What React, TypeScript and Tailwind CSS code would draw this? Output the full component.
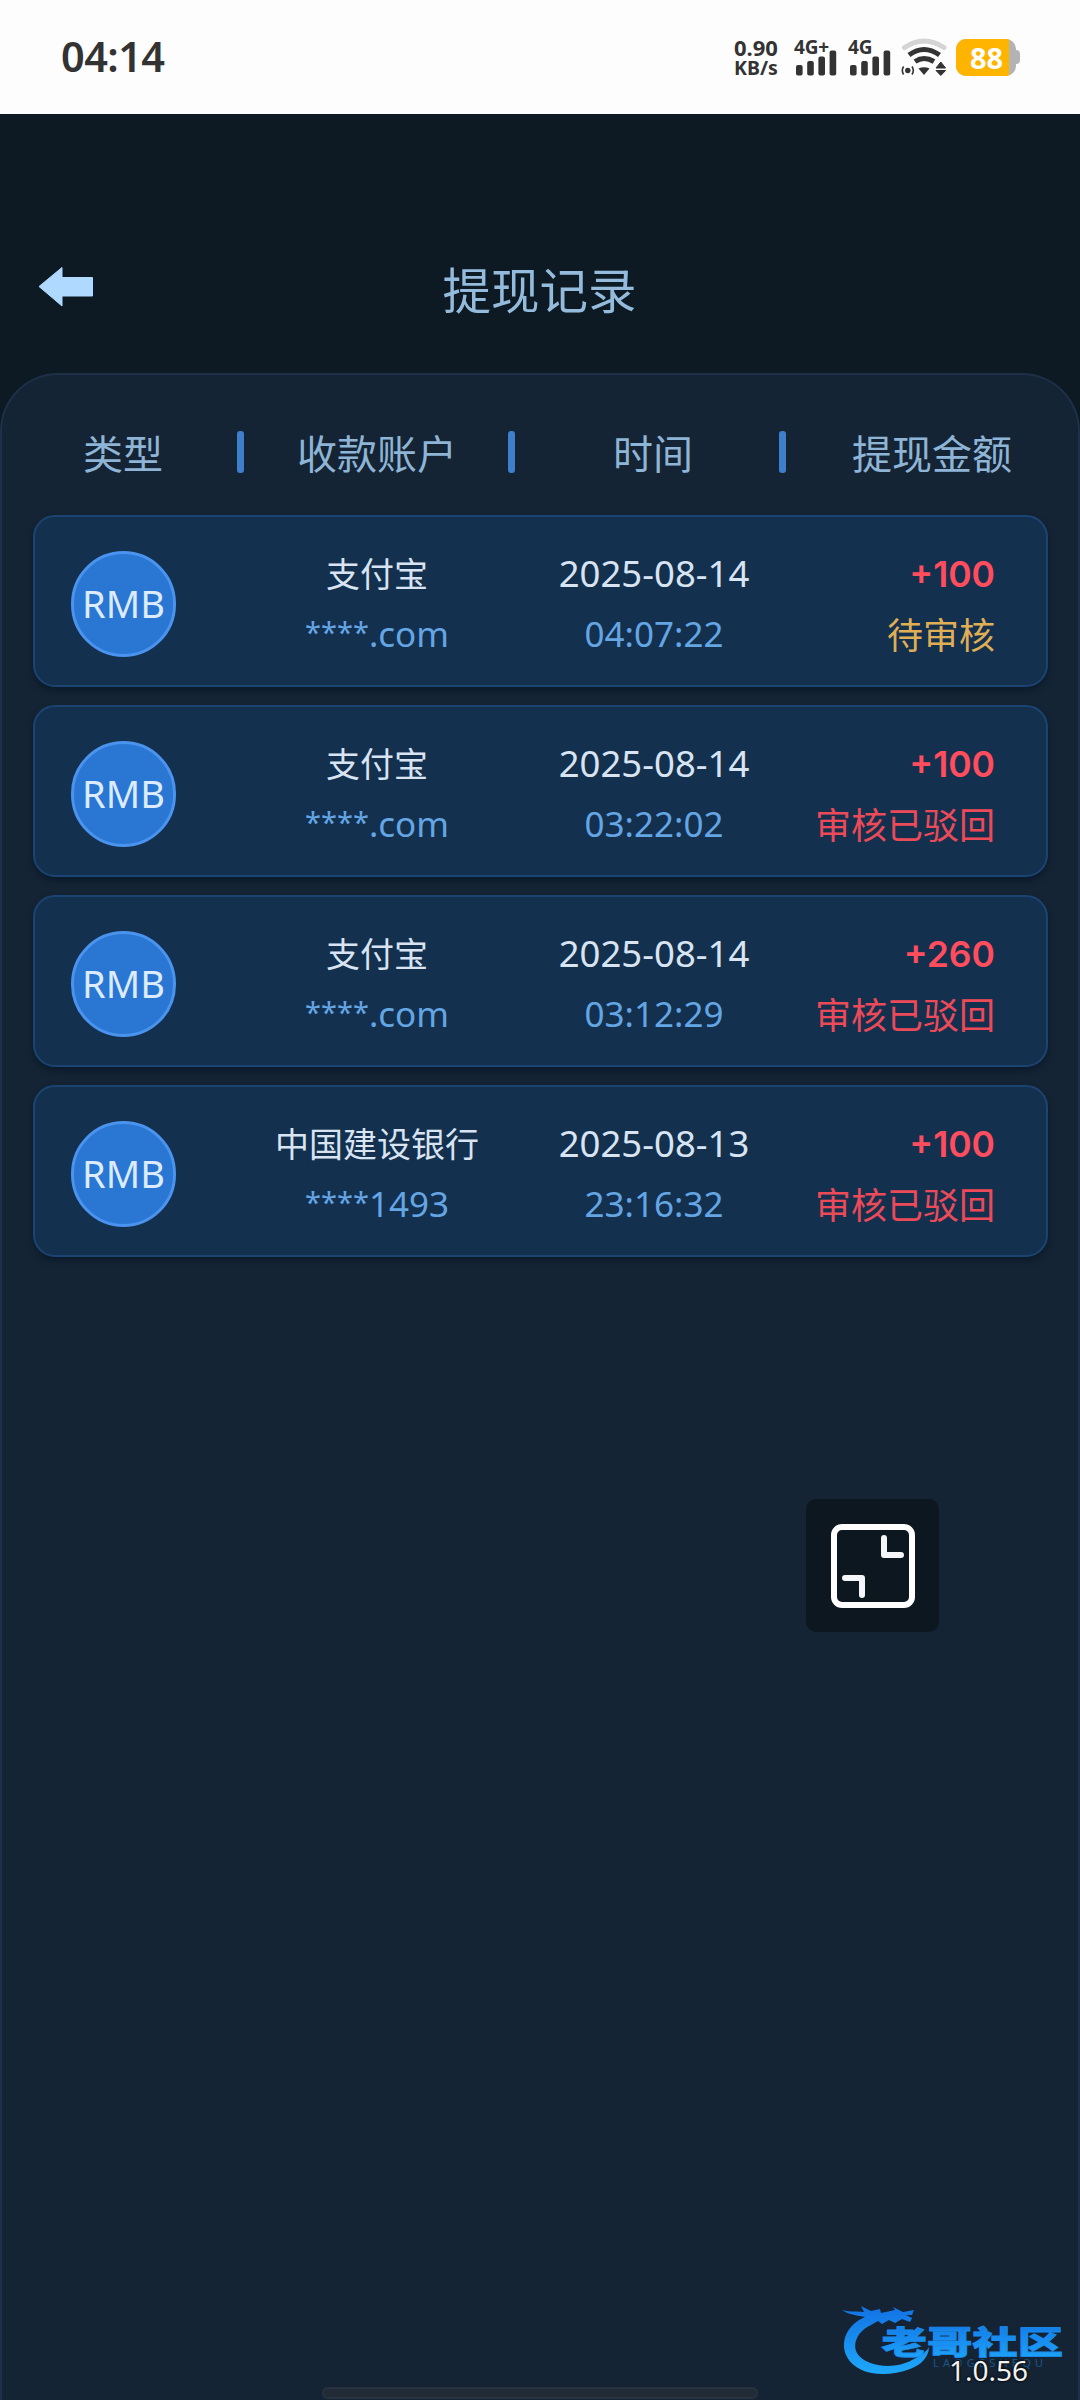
type WithdrawRecord = {
  id: number
  type: string
  account: string
  suffix: string
  date: string
  time: string
  amount: string
  status: 'pending' | 'rejected'
}

const records: WithdrawRecord[] = [
  { id: 1, type: 'RMB', account: '支付宝', suffix: '.com', date: '2025-08-14', time: '04:07:22', amount: '+100', status: 'pending' },
  { id: 2, type: 'RMB', account: '支付宝', suffix: '.com', date: '2025-08-14', time: '03:22:02', amount: '+100', status: 'rejected' },
  { id: 3, type: 'RMB', account: '支付宝', suffix: '.com', date: '2025-08-14', time: '03:12:29', amount: '+260', status: 'rejected' },
  { id: 4, type: 'RMB', account: '中国建设银行', suffix: '1493', date: '2025-08-13', time: '23:16:32', amount: '+100', status: 'rejected' },
]

const statusMap = {
  pending: { label: '待审核', className: 'text-[#dfae55]' },
  rejected: { label: '审核已驳回', className: 'text-[#ec4a58]' },
}

function SignalIcon({ label }: { label: string }) {
  return (
    <svg className="w-[44px] h-[38px] shrink-0 overflow-visible" viewBox="0 0 44 38" fill="#333">
      <text x="0" y="16" fontSize="19" fontWeight="700" letterSpacing="-0.2">{label}</text>
      <rect x="2" y="27" width="6.6" height="10.5" rx="2" />
      <rect x="13.2" y="23" width="6.6" height="14.5" rx="2" />
      <rect x="24.4" y="18.5" width="6.6" height="19" rx="2" />
      <rect x="35.6" y="12.5" width="6.6" height="25" rx="2" />
    </svg>
  )
}

function WifiIcon() {
  return (
    <svg className="w-[46px] h-[38px] shrink-0" viewBox="0 0 46 38" fill="none">
      <path d="M3.5 9.5 Q23 -3.5 43 9.5" stroke="#d4d4d4" strokeWidth="5" strokeLinecap="round" />
      <path d="M8 17 Q23 6 38.5 17" stroke="#333" strokeWidth="5" />
      <path d="M14 23.5 Q23 17.5 33 23.5" stroke="#333" strokeWidth="5" />
      <path d="M17.5 30.5 Q23 28 28.5 30.5 L23 37 Z" fill="#333" />
      <circle cx="6.8" cy="32.5" r="2.7" fill="#333" />
      <path d="M2.6 28.5 Q0 32.5 2.6 36.5 M11 28.5 Q13.6 32.5 11 36.5" stroke="#333" strokeWidth="1.6" />
      <path d="M35 30 L39.8 24 L44.6 30 Z M35 32.5 L39.8 37.5 L44.6 32.5 Z" fill="#333" stroke="#333" strokeWidth="1" strokeLinejoin="round" />
    </svg>
  )
}

function Battery({ level }: { level: number }) {
  return (
    <div className="flex items-center">
      <div className="flex w-[60px] h-[37px] rounded-[10px] overflow-hidden bg-[#b3b3b3]">
        <div className="w-[53px] h-full bg-[#ffb400] pl-[8px] text-center text-white text-[29px] leading-[37px] font-bold">
          {level}
        </div>
      </div>
      <div className="w-[4px] h-[14px] rounded-r-[4px] bg-[#b3b3b3]" />
    </div>
  )
}

function StatusBar() {
  return (
    <div className="h-[114px] bg-[#fdfdfd] flex items-start text-[#333]">
      <div className="w-[734px] pl-[61px] pt-[28px] text-[41.5px] leading-[57px] font-semibold tracking-[-0.6px]">04:14</div>
      <div className="w-[60px] pt-[36px] text-[22px] leading-[22px] font-bold whitespace-nowrap">
        <div>0.90</div>
        <div className="text-[19.5px] leading-[20px]">KB/s</div>
      </div>
      <div className="flex pt-[38px]">
        <SignalIcon label="4G+" />
        <div className="w-[10px]" />
        <SignalIcon label="4G" />
        <div className="w-[9px]" />
        <WifiIcon />
        <div className="w-[9px]" />
        <Battery level={88} />
      </div>
    </div>
  )
}

function Divider() {
  return <div className="w-[7px] h-[42px] rounded-[3px] bg-[#3d7fcb]" />
}

function RecordCard({ record }: { record: WithdrawRecord }) {
  const status = statusMap[record.status]

  return (
    <div className="h-[172px] flex items-start rounded-[22px] border-[2px] border-[#1b4472] bg-[#14304f] shadow-[0_4px_6px_#0b1b2b] whitespace-nowrap">
      <div className="mt-[34px] ml-[36px] w-[105px] h-[106px] pb-[2px] rounded-full border-[3px] border-[#4a93ee] bg-[#2a76d3] flex items-center justify-center text-[38px] text-[#dcebff]">
        {record.type}
      </div>
      <div className="ml-[50px] w-[302px] pt-[31px] text-center">
        <div className="text-[34px] leading-[52px] text-[#d9e4f2]">{record.account}</div>
        <div className="mt-[4px] h-[60px] text-[35px] leading-[60px] text-[#64a6e4]">
          <span className="text-[29px] leading-[29px] align-[4px]">****</span>
          <span>{record.suffix}</span>
        </div>
      </div>
      <div className="w-[252px] pt-[28px] text-center">
        <div className="text-[36.5px] leading-[56px] text-[#d9e4f2]">{record.date}</div>
        <div className="mt-[3px] text-[35px] leading-[60px] text-[#64a6e4]">{record.time}</div>
      </div>
      <div className="flex-1 pt-[29px] pr-[51px] text-right">
        <div className="font-['Inter',sans-serif] font-semibold text-[35.5px] leading-[58px] text-[#ff4d5e]">{record.amount}</div>
        <div className={`mt-[2px] text-[36px] leading-[60px] ${status.className}`}>{status.label}</div>
      </div>
    </div>
  )
}

function ShrinkButton() {
  return (
    <button aria-label="缩小" className="absolute left-[806px] top-[1499px] w-[133px] h-[133px] rounded-[10px] bg-[#0d171f] flex items-center justify-center">
      <svg className="w-[84px] h-[84px]" viewBox="0 0 84 84" fill="none" stroke="#f4f6f9" strokeWidth="6" strokeLinecap="round" strokeLinejoin="round">
        <rect x="3" y="3" width="78" height="78" rx="8" stroke="#fff" />
        <path d="M53 14 V31 H70" />
        <path d="M14 54 H31 V71" />
      </svg>
    </button>
  )
}

function Watermark() {
  return (
    <svg className="absolute left-[835px] top-[2295px] w-[235px] h-[90px] overflow-visible" viewBox="0 0 235 90">
      <defs>
        <linearGradient id="wm" x1="0" y1="0" x2="0" y2="1">
          <stop offset="0" stopColor="#1272e4" />
          <stop offset="1" stopColor="#1ea8fa" />
        </linearGradient>
      </defs>
      {/* dragon: curved tail and head */}
      <path
        fill="url(#wm)"
        d="M7 15 C12 17 20 16 29 17 L26 11 L36 16 L45 14 L46 18 L60 15 L58 12 L68 17 L79 15 L77 20 L71 20 L77 23 L75 27 L67 24 L60 28 L54 25 L47 29 L43 26 L36 30 C23 36 17 48 22 58 C30 72 60 75 77 65 C87 60 92 56 94 52 C94 62 86 70 75 74 C49 84 21 79 12 62 C4 46 13 29 30 22 C20 20 12 19 7 15 Z"
      />
      <text
        transform="translate(46.5 59) scale(1.42 1)"
        fontSize="32"
        fontWeight="900"
        fill="url(#wm)"
        stroke="#1a8def"
        strokeWidth="0.8"
        className="font-['Noto_Sans_CJK_SC',sans-serif]"
      >
        老哥社区
      </text>
      <text x="98" y="72" fontSize="11" textLength="110" fill="#1d5585">LAOGESHEQU</text>
    </svg>
  )
}

export default function App() {
  return (
    <div className="relative w-[1080px] h-[2400px] overflow-hidden flex flex-col bg-[#0d1923] font-['Noto_Sans','Noto_Sans_CJK_SC',sans-serif]">
      <StatusBar />

      {/* 标题栏 */}
      <header className="h-[259px] flex items-start">
        <button aria-label="返回" className="mt-[153px] ml-[38px] w-[55px] h-[40px]">
          <svg className="w-[55px] h-[40px]" viewBox="0 0 55 40">
            <path d="M1 19.5 L24 0.5 V10.5 H54.5 V29 H24 V39 Z" fill="#b0d9ff" stroke="#b0d9ff" strokeLinejoin="round" />
          </svg>
        </button>
        <h1 className="flex-1 mt-[141px] pr-[94px] text-center text-[48.5px] leading-[70px] text-[#94bbdc]">提现记录</h1>
      </header>

      {/* 列表 */}
      <main className="flex-1 rounded-t-[58px] border-[2px] border-b-0 border-[#1d3047] bg-[#152434]">
        <div className="mt-[56px] flex items-center h-[42px] text-[40px] text-[#8eb4d6] whitespace-nowrap">
          <div className="w-[235px] pl-[81px] pt-[4px] leading-[42px]">类型</div>
          <Divider />
          <div className="w-[264px] pl-[2px] pt-[4px] leading-[42px] text-center">收款账户</div>
          <Divider />
          <div className="w-[264px] pl-[12px] pt-[4px] leading-[42px] text-center">时间</div>
          <Divider />
          <div className="pl-[66px] pt-[4px] leading-[42px]">提现金额</div>
        </div>
        <div className="mt-[42px] ml-[31px] mr-[30px] flex flex-col gap-[18px]">
          {records.map((record) => (
            <RecordCard key={record.id} record={record} />
          ))}
        </div>
      </main>

      <ShrinkButton />
      <Watermark />
      <div className="absolute left-[949px] top-[2350px] text-[28px] leading-[40px] text-[#f2f2f2] [text-shadow:0_0_3px_#000,0_0_2px_#000]">1.0.56</div>
      <div className="absolute left-[322px] top-[2387px] w-[436px] h-[12px] rounded-full border-[2px] border-[#26323f] bg-[#222b35]" />
    </div>
  )
}
